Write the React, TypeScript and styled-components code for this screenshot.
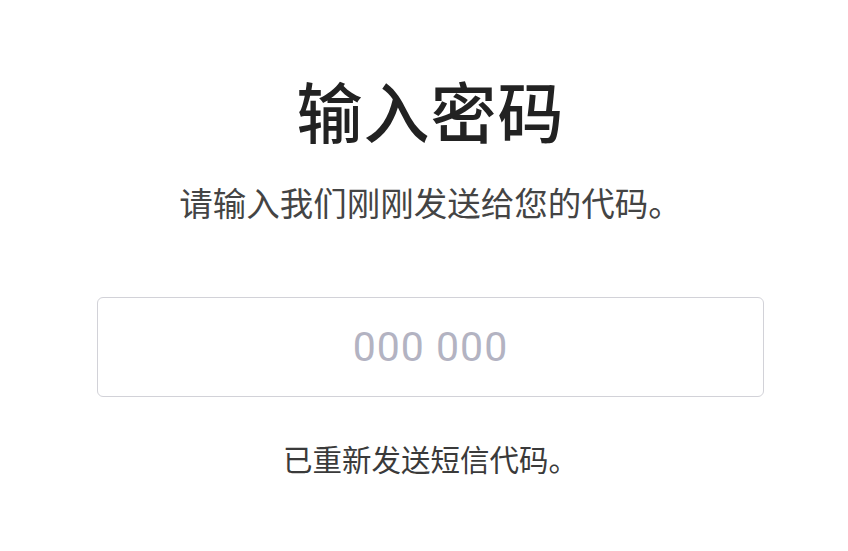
import styled, { createGlobalStyle } from "styled-components";

const GlobalStyle = createGlobalStyle`
  html, body {
    margin: 0;
    padding: 0;
    background: #ffffff;
  }
  body {
    font-family: "Noto Sans CJK SC", "Noto Sans", sans-serif;
  }
`;

const Page = styled.div`
  width: 848px;
  height: 551px;
  display: flex;
  flex-direction: column;
  align-items: center;
  padding: 74px 0 0 13px;
  box-sizing: border-box;
`;

const Title = styled.h1`
  margin: 0;
  font-size: 66px;
  line-height: 70px;
  font-weight: 500;
  color: #222222;
  letter-spacing: 1px;
`;

const Subtitle = styled.p`
  margin: 38px 0 0;
  font-size: 33.5px;
  line-height: 40px;
  color: #444444;
`;

const CodeInput = styled.input`
  margin-top: 75px;
  width: 667px;
  height: 100px;
  box-sizing: border-box;
  border: 1.5px solid #d2d2d8;
  border-radius: 6px;
  outline: none;
  text-align: center;
  font-family: Roboto, "Noto Sans", sans-serif;
  font-size: 41px;
  letter-spacing: 1px;
  color: #333;

  &::placeholder {
    color: #b3b3c2;
  }
`;

const Notice = styled.p`
  margin: 42px 0 0;
  font-size: 29.5px;
  line-height: 38px;
  color: #3a3a3a;
`;

const App = () => {
  return (
    <>
      <GlobalStyle />
      <Page>
        <Title>输入密码</Title>
        <Subtitle>请输入我们刚刚发送给您的代码。</Subtitle>
        <CodeInput placeholder="000 000" />
        <Notice>已重新发送短信代码。</Notice>
      </Page>
    </>
  );
};

export default App;
